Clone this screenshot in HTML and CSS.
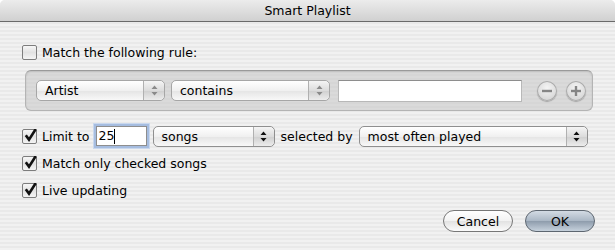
FILE: index.html
```html
<!DOCTYPE html>
<html lang="en">
<head>
  <meta charset="UTF-8" />
  <title>Smart Playlist</title>
  <link rel="stylesheet" href="styles.css">
</head>
<body>
  <div class="window">
    <div class="titlebar">Smart Playlist</div>

    <div class="content">
      <label class="row first">
        <span class="check"></span>
        Match the following rule:
      </label>

      <div class="rulebox">
        <div class="popup small artist">
          <span class="popup-text">Artist</span>
          <span class="arrows">
            <svg width="7" height="11" viewBox="0 0 7 11"><path d="M3.5 0.5 L6.5 4 L0.5 4 Z M3.5 10.5 L6.5 7 L0.5 7 Z" fill="#8a8a8a"/></svg>
          </span>
        </div>
        <div class="popup small cond">
          <span class="popup-text">contains</span>
          <span class="arrows">
            <svg width="7" height="11" viewBox="0 0 7 11"><path d="M3.5 0.5 L6.5 4 L0.5 4 Z M3.5 10.5 L6.5 7 L0.5 7 Z" fill="#8a8a8a"/></svg>
          </span>
        </div>
        <div class="field value"></div>
        <div class="roundbtn minus">
          <svg width="20" height="20" viewBox="0 0 20 20"><rect x="5" y="8.8" width="10" height="2.4" fill="#858585"/></svg>
        </div>
        <div class="roundbtn">
          <svg width="20" height="20" viewBox="0 0 20 20"><rect x="5" y="8.8" width="10" height="2.4" fill="#858585"/><rect x="8.8" y="5" width="2.4" height="10" fill="#858585"/></svg>
        </div>
      </div>

      <div class="row limit">
        <span class="check on">
          <svg width="14" height="14" viewBox="0 0 14 14"><path d="M2.8 6.2 L6 10.6 L12.8 0" fill="none" stroke="#111" stroke-width="2.6"/></svg>
        </span>
        <span class="label">Limit to</span>
        <div class="field focus">25<span class="caret"></span></div>
        <div class="popup songs">
          <span class="popup-text">songs</span>
          <span class="arrows">
            <svg width="7" height="11" viewBox="0 0 7 11"><path d="M3.5 0.5 L6.5 4 L0.5 4 Z M3.5 10.5 L6.5 7 L0.5 7 Z" fill="#111"/></svg>
          </span>
        </div>
        <span class="label">selected by</span>
        <div class="popup order">
          <span class="popup-text">most often played</span>
          <span class="arrows">
            <svg width="7" height="11" viewBox="0 0 7 11"><path d="M3.5 0.5 L6.5 4 L0.5 4 Z M3.5 10.5 L6.5 7 L0.5 7 Z" fill="#111"/></svg>
          </span>
        </div>
      </div>

      <label class="row">
        <span class="check on">
          <svg width="14" height="14" viewBox="0 0 14 14"><path d="M2.8 6.2 L6 10.6 L12.8 0" fill="none" stroke="#111" stroke-width="2.6"/></svg>
        </span>
        Match only checked songs
      </label>

      <label class="row">
        <span class="check on">
          <svg width="14" height="14" viewBox="0 0 14 14"><path d="M2.8 6.2 L6 10.6 L12.8 0" fill="none" stroke="#111" stroke-width="2.6"/></svg>
        </span>
        Live updating
      </label>

      <div class="buttons">
        <button class="btn">Cancel</button>
        <button class="btn default">OK</button>
      </div>
    </div>
  </div>
</body>
</html>
```

FILE: styles.css
```css
body {
  margin: 0;
  background: #fff;
  font-family: 'DejaVu Sans', sans-serif;
  font-size: 12.5px;
  color: #000;
}

.window {
  width: 615px;
  height: 250px;
  border-radius: 5px 5px 0 0;
  overflow: hidden;
  background: repeating-linear-gradient(to bottom, #f1f1f1 0, #f1f1f1 2px, #e9e9e9 2px, #e9e9e9 4px);
}

.titlebar {
  height: 21px;
  line-height: 21px;
  text-align: center;
  background: linear-gradient(to bottom, #ececec, #d0d0d0);
  border-bottom: 1px solid #6a6a6a;
  font-size: 12.5px;
}

.content {
  padding: 23px 20px 0 22px;
}

.row {
  display: flex;
  align-items: center;
  height: 22px;
  margin-top: 5px;
}

.row.first {
  height: 14px;
  margin-top: 0;
}

.check {
  width: 13px;
  height: 13px;
  border: 1px solid #7d7d7d;
  border-radius: 2px;
  background: linear-gradient(to bottom, #f7f7f7, #e2e2e2 50%, #f4f4f4);
  margin-right: 5px;
  position: relative;
  flex: none;
}

.check svg {
  position: absolute;
  left: 0;
  top: -1px;
}

.rulebox {
  display: flex;
  align-items: center;
  margin: 11px 0 0 3px;
  width: 550px;
  height: 39px;
  padding: 0 6px 0 10px;
  border: 1px solid #b4b4b4;
  border-top-color: #9a9a9a;
  border-radius: 6px;
  background: rgba(190, 190, 190, 0.45);
  box-shadow: inset 0 1px 2px rgba(0, 0, 0, 0.12);
}

.rulebox > * {
  flex: none;
}

.popup {
  display: flex;
  align-items: center;
  height: 19px;
  border: 1px solid #8f8f8f;
  border-radius: 5px;
  background: linear-gradient(to bottom, #ffffff, #f0f0f0 50%, #e4e4e4 51%, #f8f8f8);
  flex: none;
}

.popup-text {
  flex: 1;
  padding-left: 8px;
}

.arrows {
  width: 20px;
  height: 100%;
  border-left: 1px solid #b0b0b0;
  display: flex;
  align-items: center;
  justify-content: center;
  background: linear-gradient(to bottom, #f4f4f4, #dcdcdc 50%, #cfcfcf 51%, #ececec);
  border-radius: 0 5px 5px 0;
}

.popup.small {
  border-color: #a6a6a6;
}

.artist {
  width: 127px;
}

.cond {
  width: 157px;
  margin-left: 6px;
}

.field {
  height: 20px;
  border: 1px solid #b8b8b8;
  border-top-color: #8e8e8e;
  background: #fff;
  flex: none;
}

.value {
  width: 182px;
  margin-left: 8px;
  margin-right: 15px;
}

.roundbtn {
  width: 20px;
  height: 20px;
  border-radius: 50%;
  background: radial-gradient(circle at 50% 35%, #f4f4f4, #d8d8d8 70%, #c4c4c4);
  box-shadow: 0 1px 1px rgba(0, 0, 0, 0.25), inset 0 0 0 1px #aaaaaa;
}

.roundbtn.minus {
  margin-right: 9px;
}

.label {
  margin-right: 6px;
}

.limit {
  margin-top: 14px;
}

.field.focus {
  width: 47px;
  height: 18px;
  line-height: 18px;
  padding-left: 2px;
  border: 1px solid #8e8e8e;
  box-shadow: 0 0 0 2px #a6bde0, 0 0 0 3px #c9d8ee;
  margin: 0 6px 0 0;
}

.caret {
  display: inline-block;
  width: 1px;
  height: 15px;
  background: #000;
  vertical-align: middle;
}

.songs {
  width: 120px;
  margin-right: 6px;
}

.order {
  width: 227px;
}

.buttons {
  display: flex;
  justify-content: flex-end;
  gap: 12px;
  margin-top: 9px;
}

.btn {
  height: 22px;
  width: 70px;
  border: 1px solid #777;
  border-radius: 11px;
  background: linear-gradient(to bottom, #ffffff, #f2f2f2 50%, #e2e2e2 51%, #fbfbfb);
  font-family: 'DejaVu Sans', sans-serif;
  font-size: 12.5px;
  padding: 0;
}

.btn.default {
  background: linear-gradient(to bottom, #d3dbe4, #a9b6c4 50%, #8e9cac 51%, #c6d1dc);
  border-color: #5d6670;
}
```
